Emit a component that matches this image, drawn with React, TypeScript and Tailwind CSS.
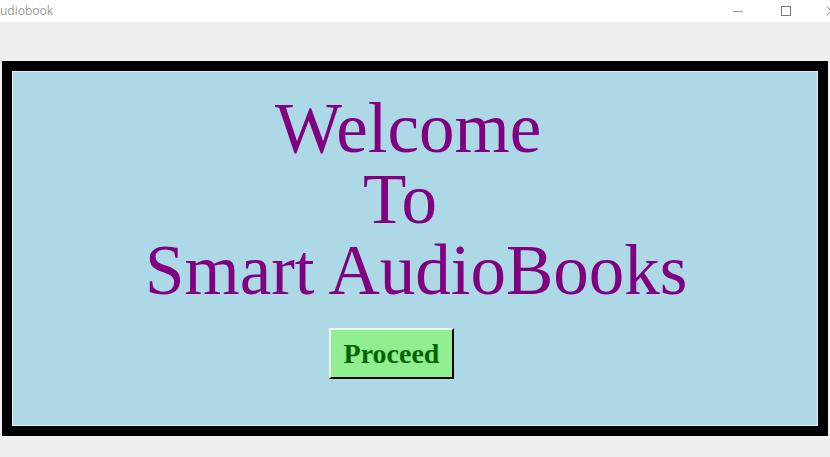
export default function App() {
  return (
    <div className="flex h-[457px] w-[830px] flex-col overflow-hidden bg-[#f0f0f0]">
      {/* window title bar */}
      <div className="flex h-[22px] shrink-0 items-center bg-white">
        <span
          className="text-[12px] leading-none text-[#9a9a9a]"
          style={{ fontFamily: '"Open Sans", Roboto, sans-serif' }}
        >
          udiobook
        </span>
        <div className="ml-auto flex items-center">
          <svg width="12" height="12" viewBox="0 0 12 12" className="mr-[36px]">
            <line x1="1" y1="6.5" x2="11" y2="6.5" stroke="#9a9a9a" strokeWidth="1" />
          </svg>
          <svg width="12" height="12" viewBox="0 0 12 12" className="mr-[34px]">
            <rect x="1.5" y="1.5" width="9" height="9" fill="none" stroke="#7a7a7a" strokeWidth="1" />
          </svg>
          <svg width="8" height="12" viewBox="0 0 8 12" className="mr-[-4px]">
            <line x1="1" y1="1.5" x2="9" y2="10.5" stroke="#7a7a7a" strokeWidth="1" />
            <line x1="1" y1="10.5" x2="9" y2="1.5" stroke="#7a7a7a" strokeWidth="1" />
          </svg>
        </div>
      </div>

      {/* main frame */}
      <div className="ml-[2px] mt-[39px] h-[375px] w-[826px] border-[10px] border-black bg-black">
        <div className="flex h-full flex-col border border-[#dfeff3] bg-[#add8e6] pt-[21px]">
          <div
            className="flex flex-col text-[71px] leading-[71px] text-[#800080]"
            style={{ fontFamily: '"Liberation Serif", "Times New Roman", serif' }}
          >
            <span className="ml-[262px]">Welcome</span>
            <span className="ml-[350px]">To</span>
            <span className="ml-[132px]">Smart AudioBooks</span>
          </div>
          <button
            className="ml-[316px] mt-[22px] h-[51px] w-[125px] border-2 border-b-black border-l-[#e8ffe8] border-r-black border-t-[#e8ffe8] bg-[#90ee90] text-[28px] font-bold leading-none text-[#006400]"
            style={{ fontFamily: '"Liberation Serif", "Times New Roman", serif' }}
          >
            Proceed
          </button>
        </div>
      </div>
    </div>
  );
}
